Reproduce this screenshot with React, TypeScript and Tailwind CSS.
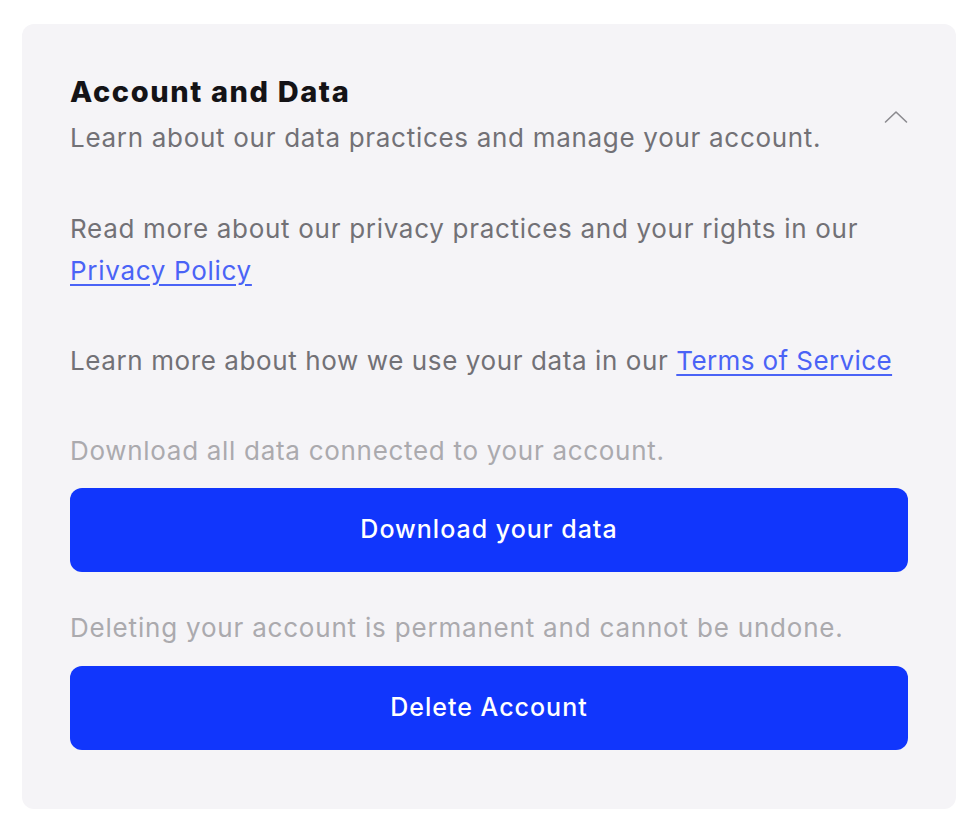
import React from 'react';

const font = { fontFamily: 'Inter, "Noto Sans", sans-serif' };

function ChevronUp() {
  return (
    <svg width="24" height="14" viewBox="0 0 24 14" fill="none" className="shrink-0">
      <path d="M1.5 12L12 2L22.5 12" stroke="#8b8a8f" strokeWidth="1.6" strokeLinecap="round" strokeLinejoin="round" />
    </svg>
  );
}

export default function App() {
  return (
    <div className="min-h-screen bg-white pl-[22px] pt-[24px]" style={font}>
      <section className="w-[934px] rounded-[12px] bg-[#f5f4f7] px-[48px] pt-[50px] pb-[59px]">
        <div className="flex items-center justify-between">
          <div>
            <h2 className="text-[29px] leading-[36px] font-extrabold tracking-[1.6px] text-[#141316]">Account and Data</h2>
            <p className="mt-[7px] text-[26px] leading-[42px] tracking-[0.7px] text-[#727176]">
              Learn about our data practices and manage your account.
            </p>
          </div>
          <ChevronUp />
        </div>

        <p className="mt-[49px] text-[26px] leading-[42px] tracking-[0.7px] text-[#727176]">
          Read more about our privacy practices and your rights in our{' '}
          <a href="#" className="text-[#4a63f6] underline underline-offset-[4px]">Privacy Policy</a>
        </p>

        <p className="mt-[48px] text-[26px] leading-[42px] tracking-[0.6px] text-[#727176]">
          Learn more about how we use your data in our{' '}
          <a href="#" className="tracking-[0.4px] text-[#4a63f6] underline underline-offset-[4px]">Terms of Service</a>
        </p>

        <p className="mt-[48px] text-[26px] leading-[42px] tracking-[0.7px] text-[#abaaae]">
          Download all data connected to your account.
        </p>
        <button className="mt-[16px] flex h-[84px] w-full items-center justify-center rounded-[12px] bg-[#1136fc] text-[25px] font-medium tracking-[1px] text-white">
          Download your data
        </button>

        <p className="mt-[35px] text-[26px] leading-[42px] tracking-[0.8px] text-[#abaaae]">
          Deleting your account is permanent and cannot be undone.
        </p>
        <button className="mt-[17px] flex h-[84px] w-full items-center justify-center rounded-[12px] bg-[#1136fc] text-[25px] font-medium tracking-[1px] text-white">
          Delete Account
        </button>
      </section>
    </div>
  );
}
